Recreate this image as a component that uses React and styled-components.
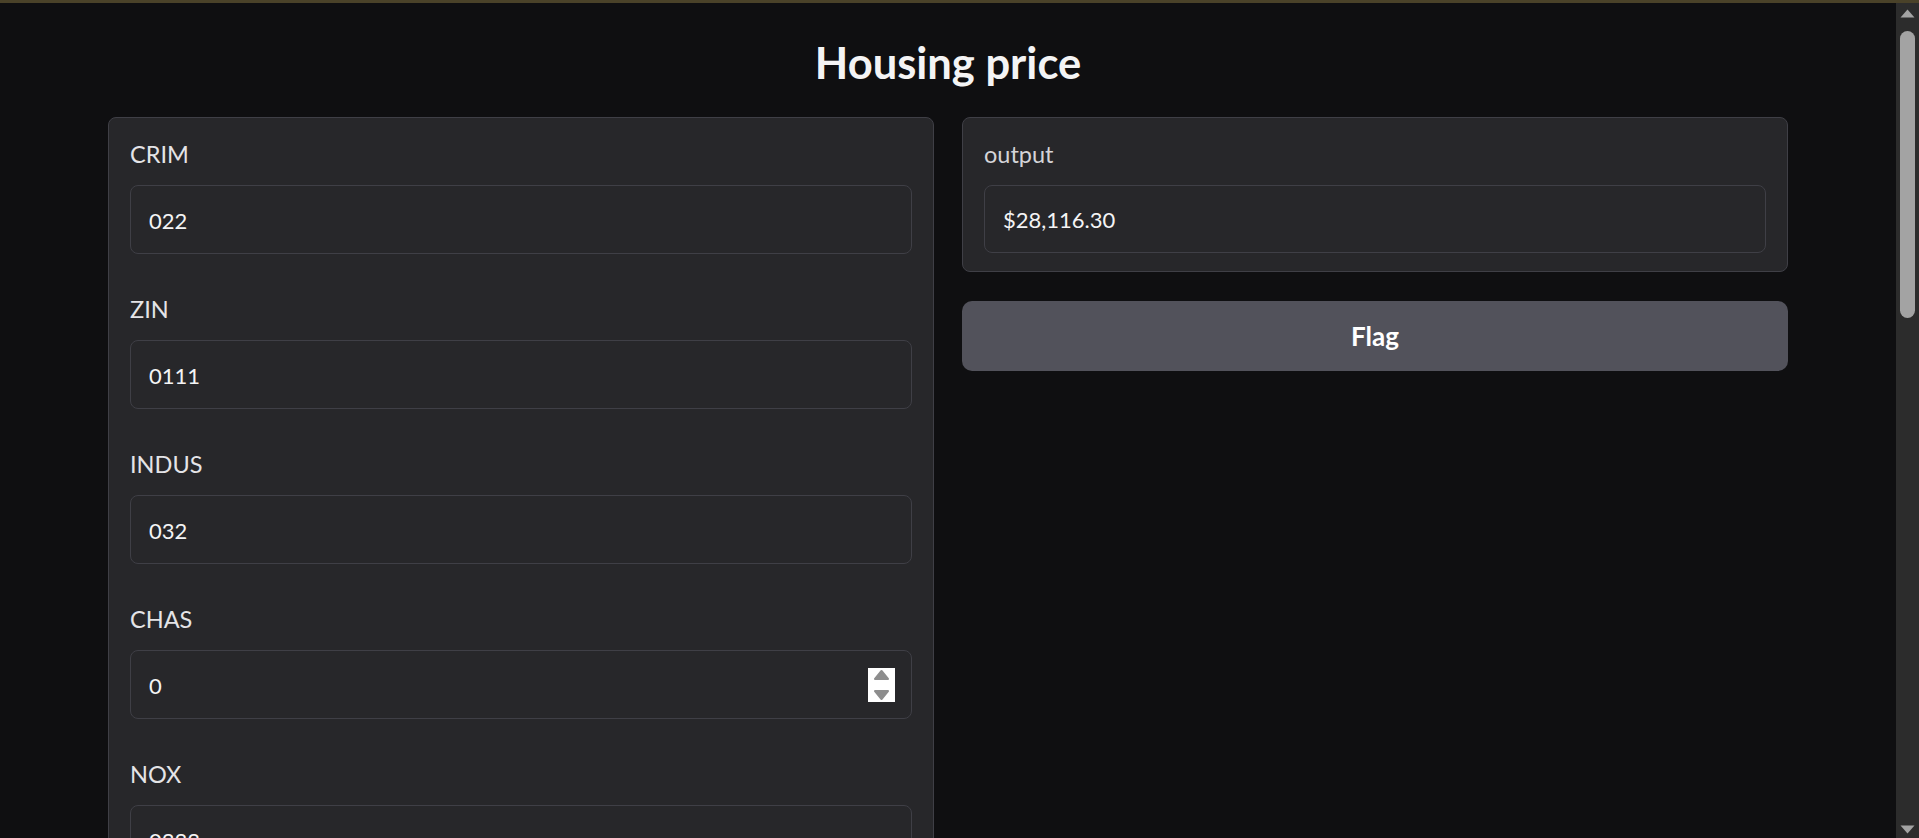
import React from "react";
import styled, { createGlobalStyle } from "styled-components";

const GlobalStyle = createGlobalStyle`
  html, body {
    margin: 0;
    padding: 0;
    background: #0f0f11;
    overflow: hidden;
  }
  body {
    font-family: Lato, "Noto Sans", "Liberation Sans", sans-serif;
    color: #f4f4f5;
  }
  * { box-sizing: border-box; }
`;

const Page = styled.div`
  height: 100vh;
  display: flex;
  flex-direction: column;
`;

const TopStripe = styled.div`
  height: 3px;
  flex: none;
  background: #4a4229;
`;

const Viewport = styled.div`
  flex: 1;
  min-height: 0;
  display: flex;
`;

const Main = styled.main`
  flex: 1;
  min-width: 0;
  overflow: hidden;
  padding-top: 31px;
`;

const Title = styled.h1`
  margin: 0 0 27px;
  text-align: center;
  font-size: 43.5px;
  line-height: 56px;
  font-weight: 700;
  color: #f4f4f5;
`;

const Columns = styled.div`
  width: 1680px;
  margin: 0 auto;
  display: grid;
  grid-template-columns: 1fr 1fr;
  gap: 28px;
  align-items: start;
`;

const Panel = styled.section`
  background: #27272a;
  border: 1px solid #3f3f46;
  border-radius: 8px;
  padding: 21px 21px 18px;
  display: flex;
  flex-direction: column;
  gap: 40px;
`;

const Field = styled.div`
  display: flex;
  flex-direction: column;
  gap: 16px;
`;

const Label = styled.label`
  display: block;
  font-size: 23.5px;
  line-height: 30px;
  height: 30px;
  color: ${(p) => (p.$muted ? "#d4d4d8" : "#e4e4e7")};
`;

const InputBox = styled.div`
  height: ${(p) => (p.$short ? "68px" : "69px")};
  display: flex;
  align-items: center;
  gap: 12px;
  padding: 1px 16px 0 18px;
  background: #27272a;
  border: 1px solid #3f3f46;
  border-radius: 8px;
`;

const TextInput = styled.input`
  flex: 1;
  min-width: 0;
  background: transparent;
  border: 0;
  outline: none;
  padding: 0;
  font-family: inherit;
  font-size: 22px;
  color: #f4f4f5;
`;

const Spinner = styled.div`
  flex: none;
  width: 27px;
  height: 34px;
  background: #ffffff;
  display: flex;
`;

const RightColumn = styled.div`
  display: flex;
  flex-direction: column;
  gap: 29px;
`;

const FlagButton = styled.button`
  height: 70px;
  border: 0;
  border-radius: 10px;
  background: #52525b;
  color: #ffffff;
  font-family: inherit;
  font-size: 26px;
  font-weight: 700;
  cursor: pointer;
`;

const ScrollTrack = styled.div`
  flex: none;
  width: 23px;
  background: #2c2c2c;
  display: flex;
  flex-direction: column;
  align-items: center;
  padding-top: 6px;
`;

const ScrollThumb = styled.div`
  width: 15px;
  height: 287px;
  margin-top: 13px;
  border-radius: 8px;
  background: #a3a3a3;
`;

const ScrollSpacer = styled.div`
  flex: 1;
`;

const ArrowSvg = styled.svg`
  display: block;
  flex: none;
  margin-bottom: ${(p) => (p.$bottom ? "4px" : "0")};
`;

const fields = [
  { name: "CRIM", value: "022" },
  { name: "ZIN", value: "0111" },
  { name: "INDUS", value: "032" },
  { name: "CHAS", value: "0", number: true },
  { name: "NOX", value: "0333" },
  { name: "RM", value: "0666" },
  { name: "AGE", value: "0555" },
];

function SpinIcon() {
  return (
    <svg width="27" height="34" viewBox="0 0 27 34">
      <polygon
        points="13.5,3 20,11 7,11"
        fill="#8d8d8d"
        stroke="#8d8d8d"
        strokeWidth="2"
        strokeLinejoin="round"
      />
      <polygon
        points="7,23 20,23 13.5,31"
        fill="#8d8d8d"
        stroke="#8d8d8d"
        strokeWidth="2"
        strokeLinejoin="round"
      />
    </svg>
  );
}

export default function App() {
  return (
    <>
      <GlobalStyle />
      <Page>
        <TopStripe />
        <Viewport>
          <Main>
            <Title>Housing price</Title>
            <Columns>
              <Panel>
                {fields.map((f) => (
                  <Field key={f.name}>
                    <Label>{f.name}</Label>
                    <InputBox>
                      <TextInput defaultValue={f.value} readOnly />
                      {f.number && (
                        <Spinner>
                          <SpinIcon />
                        </Spinner>
                      )}
                    </InputBox>
                  </Field>
                ))}
              </Panel>
              <RightColumn>
                <Panel>
                  <Field>
                    <Label $muted>output</Label>
                    <InputBox $short>
                      <TextInput defaultValue="$28,116.30" readOnly />
                    </InputBox>
                  </Field>
                </Panel>
                <FlagButton>Flag</FlagButton>
              </RightColumn>
            </Columns>
          </Main>
          <ScrollTrack>
            <ArrowSvg width="15" height="9" viewBox="0 0 15 9">
              <polygon points="7.5,0.5 14.5,8.5 0.5,8.5" fill="#a3a3a3" />
            </ArrowSvg>
            <ScrollThumb />
            <ScrollSpacer />
            <ArrowSvg $bottom width="15" height="9" viewBox="0 0 15 9">
              <polygon points="0.5,0.5 14.5,0.5 7.5,8.5" fill="#a3a3a3" />
            </ArrowSvg>
          </ScrollTrack>
        </Viewport>
      </Page>
    </>
  );
}
